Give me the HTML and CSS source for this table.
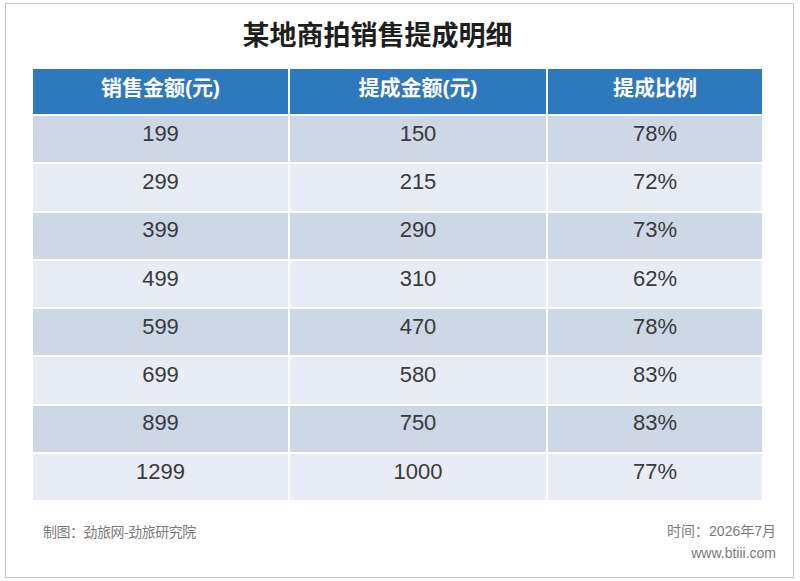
FILE: index.html
```html
<!DOCTYPE html>
<html lang="zh-CN">
<head>
<meta charset="utf-8">
<title>某地商拍销售提成明细</title>
<link rel="stylesheet" href="styles.css">
</head>
<body>
<div class="frame">
  <h1 class="title">某地商拍销售提成明细</h1>
  <table class="data">
    <colgroup>
      <col class="c1"><col class="c2"><col class="c3">
    </colgroup>
    <thead>
      <tr><th>销售金额(元)</th><th>提成金额(元)</th><th>提成比例</th></tr>
    </thead>
    <tbody>
      <tr class="dark"><td>199</td><td>150</td><td>78%</td></tr>
      <tr class="light"><td>299</td><td>215</td><td>72%</td></tr>
      <tr class="dark"><td>399</td><td>290</td><td>73%</td></tr>
      <tr class="light"><td>499</td><td>310</td><td>62%</td></tr>
      <tr class="dark"><td>599</td><td>470</td><td>78%</td></tr>
      <tr class="light"><td>699</td><td>580</td><td>83%</td></tr>
      <tr class="dark"><td>899</td><td>750</td><td>83%</td></tr>
      <tr class="light"><td>1299</td><td>1000</td><td>77%</td></tr>
    </tbody>
  </table>
  <div class="footer">
    <div class="source">制图：劲旅网-劲旅研究院</div>
    <div class="meta">
      <div>时间：2026年7月</div>
      <div>www.btiii.com</div>
    </div>
  </div>
</div>
</body>
</html>
```
FILE: styles.css
```css
html, body {
  margin: 0;
  padding: 0;
  background: #ffffff;
}
body {
  font-family: "Liberation Sans", "Noto Sans CJK SC", sans-serif;
}
.frame {
  box-sizing: border-box;
  margin: 3px 0 0 5px;
  width: 789px;
  height: 575px;
  border: 1px solid #c4c4c4;
  background: #ffffff;
  display: flex;
  flex-direction: column;
}
.title {
  margin: 13px 0 0 0;
  padding-right: 44px;
  height: 50px;
  line-height: 34px;
  font-family: "Noto Sans CJK SC", sans-serif;
  font-size: 27px;
  font-weight: bold;
  color: #1e1e1e;
  text-align: center;
  letter-spacing: 0;
}
.data {
  margin-left: 25px;
  width: 731px;
  border-collapse: collapse;
  table-layout: fixed;
}
.c1 { width: 257px; }
.c2 { width: 258px; }
.c3 { width: 216px; }
.data th, .data td {
  border: 2px solid #ffffff;
  text-align: center;
  padding: 0;
}
.data th {
  background: #2e78bd;
  color: #ffffff;
  height: 47px;
  box-sizing: border-box;
  padding-bottom: 12px;
  font-family: "Liberation Sans", "Noto Sans CJK SC", sans-serif;
  font-size: 21px;
  font-weight: bold;
}
.data td {
  height: 48.3px;
  box-sizing: border-box;
  padding-bottom: 11px;
  font-size: 22px;
  color: #3a3a3a;
}
.dark td { background: #cdd7e5; }
.light td { background: #e8ecf4; }
.footer {
  display: flex;
  justify-content: space-between;
  align-items: flex-start;
  margin-top: 18px;
  padding: 0 17px 0 37px;
  font-family: "Noto Sans CJK SC", sans-serif;
  font-size: 13px;
  line-height: 22px;
  color: #7a7a7a;
}
.meta {
  text-align: right;
  font-family: "Liberation Sans", "Noto Sans CJK SC", sans-serif;
  font-size: 14px;
}
.source {
  font-size: 14px;
  letter-spacing: -0.5px;
}
```
